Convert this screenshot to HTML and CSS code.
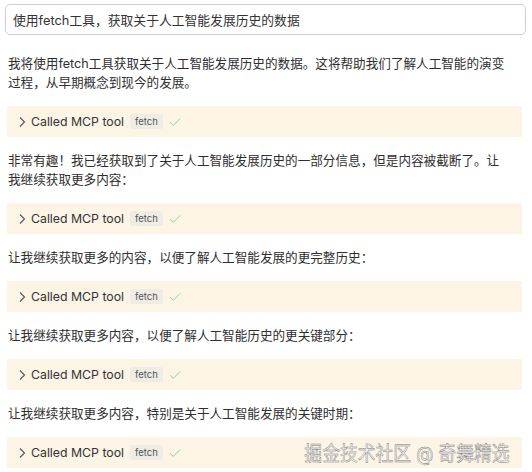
FILE: index.html
```html
<!DOCTYPE html>
<html lang="zh-CN">
<head>
  <meta charset="UTF-8" />
  <meta name="viewport" content="width=device-width, initial-scale=1.0"/>
  <title>MCP fetch</title>
  <link rel="stylesheet" href="styles.css">
</head>
<body>

  <div class="chat">
    <div class="prompt">使用fetch工具，获取关于人工智能发展历史的数据</div>

    <p class="msg">我将使用fetch工具获取关于人工智能发展历史的数据。这将帮助我们了解人工智能的演变过程，从早期概念到现今的发展。</p>
    <div class="tool">
      <svg class="chev" viewBox="0 0 10 14" width="10" height="14"><path d="M3 2.5 L7.5 7 L3 11.5" fill="none" stroke="#555" stroke-width="1.1"/></svg>
      <span class="tool-label">Called MCP tool</span>
      <span class="badge">fetch</span>
      <svg class="check" viewBox="0 0 12 10" width="12" height="10"><path d="M1 5.2 L4.3 8.4 L11 1.6" fill="none" stroke="#93cf93" stroke-width="1"/></svg>
    </div>

    <p class="msg">非常有趣！我已经获取到了关于人工智能发展历史的一部分信息，但是内容被截断了。让我继续获取更多内容：</p>
    <div class="tool">
      <svg class="chev" viewBox="0 0 10 14" width="10" height="14"><path d="M3 2.5 L7.5 7 L3 11.5" fill="none" stroke="#555" stroke-width="1.1"/></svg>
      <span class="tool-label">Called MCP tool</span>
      <span class="badge">fetch</span>
      <svg class="check" viewBox="0 0 12 10" width="12" height="10"><path d="M1 5.2 L4.3 8.4 L11 1.6" fill="none" stroke="#93cf93" stroke-width="1"/></svg>
    </div>

    <p class="msg">让我继续获取更多的内容，以便了解人工智能发展的更完整历史：</p>
    <div class="tool">
      <svg class="chev" viewBox="0 0 10 14" width="10" height="14"><path d="M3 2.5 L7.5 7 L3 11.5" fill="none" stroke="#555" stroke-width="1.1"/></svg>
      <span class="tool-label">Called MCP tool</span>
      <span class="badge">fetch</span>
      <svg class="check" viewBox="0 0 12 10" width="12" height="10"><path d="M1 5.2 L4.3 8.4 L11 1.6" fill="none" stroke="#93cf93" stroke-width="1"/></svg>
    </div>

    <p class="msg">让我继续获取更多内容，以便了解人工智能历史的更关键部分：</p>
    <div class="tool">
      <svg class="chev" viewBox="0 0 10 14" width="10" height="14"><path d="M3 2.5 L7.5 7 L3 11.5" fill="none" stroke="#555" stroke-width="1.1"/></svg>
      <span class="tool-label">Called MCP tool</span>
      <span class="badge">fetch</span>
      <svg class="check" viewBox="0 0 12 10" width="12" height="10"><path d="M1 5.2 L4.3 8.4 L11 1.6" fill="none" stroke="#93cf93" stroke-width="1"/></svg>
    </div>

    <p class="msg">让我继续获取更多内容，特别是关于人工智能发展的关键时期：</p>
    <div class="tool">
      <svg class="chev" viewBox="0 0 10 14" width="10" height="14"><path d="M3 2.5 L7.5 7 L3 11.5" fill="none" stroke="#555" stroke-width="1.1"/></svg>
      <span class="tool-label">Called MCP tool</span>
      <span class="badge">fetch</span>
      <svg class="check" viewBox="0 0 12 10" width="12" height="10"><path d="M1 5.2 L4.3 8.4 L11 1.6" fill="none" stroke="#93cf93" stroke-width="1"/></svg>
    </div>
  </div>

  <div class="watermark">掘金技术社区 @ 奇舞精选</div>

</body>
</html>
```

FILE: styles.css
```css
* {
  box-sizing: border-box;
  margin: 0;
  padding: 0;
}

body {
  font-family: "Inter", "Noto Sans CJK SC", sans-serif;
  font-size: 12.6px;
  color: #2e2e2e;
  background: #fff;
  height: 472px;
  overflow: hidden;
  position: relative;
}

.chat {
  padding: 4px 10px 0 7px;
}

.prompt {
  margin: 0 -4px 0 -2px;
  height: 31px;
  border: 1px solid #cfcfcf;
  border-radius: 5px;
  padding: 0 7px;
  display: flex;
  align-items: center;
  font-size: 12.8px;
  color: #333;
}

.prompt + .msg {
  margin-top: 19px;
}

.msg {
  line-height: 19px;
  margin: 14px 16px 14px 1px;
}

.tool {
  height: 31px;
  background: #fcf4e5;
  display: flex;
  align-items: center;
  padding-left: 10px;
}

.chev {
  margin-right: 4px;
}

.tool-label {
  font-size: 12.3px;
  color: #333;
}

.badge {
  font-size: 9.5px;
  color: #555;
  background: #efece6;
  border-radius: 3px;
  padding: 2px 5px;
  margin-left: 6px;
}

.check {
  margin-left: 6px;
}

.watermark {
  position: absolute;
  right: 22px;
  bottom: 5px;
  font-size: 20px;
  color: #f3f3f3;
  -webkit-text-stroke: 0.45px #7a7a7a;
  transform: scaleX(0.89);
  transform-origin: right center;
}
```
